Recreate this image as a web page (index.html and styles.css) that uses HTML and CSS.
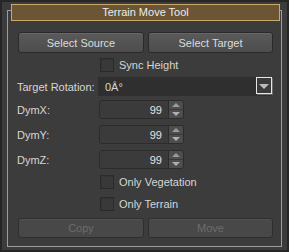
FILE: index.html
```html
<!DOCTYPE html>
<html lang="en">
<head>
  <meta charset="UTF-8">
  <title>Terrain Move Tool</title>
  <link rel="stylesheet" href="styles.css">
</head>
<body>
  <div class="window">
    <div class="group">
      <div class="title">Terrain Move Tool</div>
      <div class="content">
        <!-- source / target -->
        <div class="btn-row top-row">
          <button class="btn">Select Source</button>
          <button class="btn">Select Target</button>
        </div>

        <div class="row check-row sync">
          <span class="label"></span>
          <span class="check"></span>
          <span class="check-text">Sync Height</span>
        </div>

        <div class="row rot">
          <span class="label">Target Rotation:</span>
          <div class="combo">
            <span class="combo-text">0Â°</span>
            <span class="combo-btn"><span class="tri-down"></span></span>
          </div>
        </div>

        <!-- dimensions -->
        <div class="row dym first">
          <span class="label">DymX:</span>
          <div class="spin"><span class="spin-val">99</span><span class="spin-btns"><span class="up"></span><span class="down"></span></span></div>
        </div>
        <div class="row dym">
          <span class="label">DymY:</span>
          <div class="spin"><span class="spin-val">99</span><span class="spin-btns"><span class="up"></span><span class="down"></span></span></div>
        </div>
        <div class="row dym">
          <span class="label">DymZ:</span>
          <div class="spin"><span class="spin-val">99</span><span class="spin-btns"><span class="up"></span><span class="down"></span></span></div>
        </div>

        <div class="row check-row veg">
          <span class="label"></span>
          <span class="check"></span>
          <span class="check-text">Only Vegetation</span>
        </div>
        <div class="row check-row terr">
          <span class="label"></span>
          <span class="check"></span>
          <span class="check-text">Only Terrain</span>
        </div>

        <div class="btn-row bottom-row">
          <button class="btn" disabled>Copy</button>
          <button class="btn" disabled>Move</button>
        </div>
      </div>
    </div>
  </div>
</body>
</html>
```

FILE: styles.css
```css
body {
  margin: 0;
  padding: 0;
  font-family: "Liberation Sans", Arial, sans-serif;
  font-size: 11px;
  color: #d6d6d6;
  background: #3c3c3c;
}
.window {
  width: 289px;
  height: 252px;
  box-sizing: border-box;
  border: 2px solid #262626;
  background: #3c3c3c;
  padding: 8px 5px 4px 5px;
}
.group {
  height: 237px;
  box-sizing: border-box;
  border: 1px solid #9c9c9c;
}
.title {
  margin: -7px 1px 0 3px;
  height: 17px;
  box-sizing: border-box;
  background: #6b5535;
  border: 1px solid #c9a96c;
  color: #ececec;
  text-align: center;
  line-height: 15px;
}
.content {
  padding: 0 7px 0 10px;
}
.btn-row {
  display: grid;
  grid-template-columns: 126px 125px;
  gap: 4px;
}
.top-row {
  margin-top: 11px;
}
.btn {
  height: 21px;
  font-family: inherit;
  font-size: 11px;
  color: #dcdcdc;
  background: linear-gradient(#5a5a5a, #4d4d4d);
  border: 1px solid #2a2a2a;
  border-radius: 3px;
  box-shadow: inset 0 1px 0 #676767;
  padding: 0;
}
.btn:disabled {
  color: #6c6c6c;
  background: #484848;
  box-shadow: inset 0 1px 0 #525252;
  border-color: #2e2e2e;
}
.bottom-row {
  margin-top: 7px;
}
.bottom-row .btn {
  height: 20px;
}
.row {
  display: flex;
  align-items: center;
}
.label {
  width: 81px;
  margin-left: -1px;
  flex-shrink: 0;
  white-space: nowrap;
}
.check-row {
  height: 14px;
}
.sync { margin-top: 5px; }
.veg { margin-top: 6px; }
.terr { margin-top: 8px; }
.check {
  width: 14px;
  height: 14px;
  box-sizing: border-box;
  margin-left: 2px;
  background: #393939;
  border: 1px solid #2a2a2a;
  box-shadow: inset 1px 1px 0 #333;
}
.check-text {
  margin-left: 5px;
}
.rot {
  margin-top: 5px;
  height: 19px;
}
.combo {
  display: flex;
  width: 174px;
  height: 19px;
  background: #2f2f2f;
}
.combo-text {
  flex: 1;
  padding-left: 7px;
  line-height: 21px;
}
.combo-btn {
  width: 16px;
  height: 17px;
  box-sizing: border-box;
  border: 1px solid #e6e6e6;
  background: #3a3a3a;
  box-shadow: 1px 1px 0 #6a6a6a;
  display: flex;
  align-items: center;
  justify-content: center;
}
.tri-down {
  width: 0;
  height: 0;
  border-left: 5px solid transparent;
  border-right: 5px solid transparent;
  border-top: 5px solid #bdbdbd;
  margin-top: 1px;
}
.dym {
  margin-top: 6px;
  height: 19px;
}
.dym.first {
  margin-top: 4px;
}
.spin {
  display: flex;
  margin-left: 1px;
  width: 85px;
  height: 19px;
  box-sizing: border-box;
  border: 1px solid #2c2c2c;
  border-radius: 3px;
  background: #3b3b3b;
}
.spin-val {
  flex: 1;
  text-align: right;
  padding-right: 6px;
  line-height: 18px;
  color: #e4e4e4;
}
.spin-btns {
  width: 14px;
  display: flex;
  flex-direction: column;
  background: #4d4d4d;
  border-left: 1px solid #2c2c2c;
  border-radius: 0 2px 2px 0;
}
.spin-btns .up,
.spin-btns .down {
  flex: 1;
  display: flex;
  align-items: center;
  justify-content: center;
}
.spin-btns .up {
  border-bottom: 1px solid #3a3a3a;
}
.spin-btns .up::after {
  content: "";
  border-left: 4px solid transparent;
  border-right: 4px solid transparent;
  border-bottom: 4px solid #9a9a9a;
}
.spin-btns .down::after {
  content: "";
  border-left: 4px solid transparent;
  border-right: 4px solid transparent;
  border-top: 4px solid #b0b0b0;
}
```
